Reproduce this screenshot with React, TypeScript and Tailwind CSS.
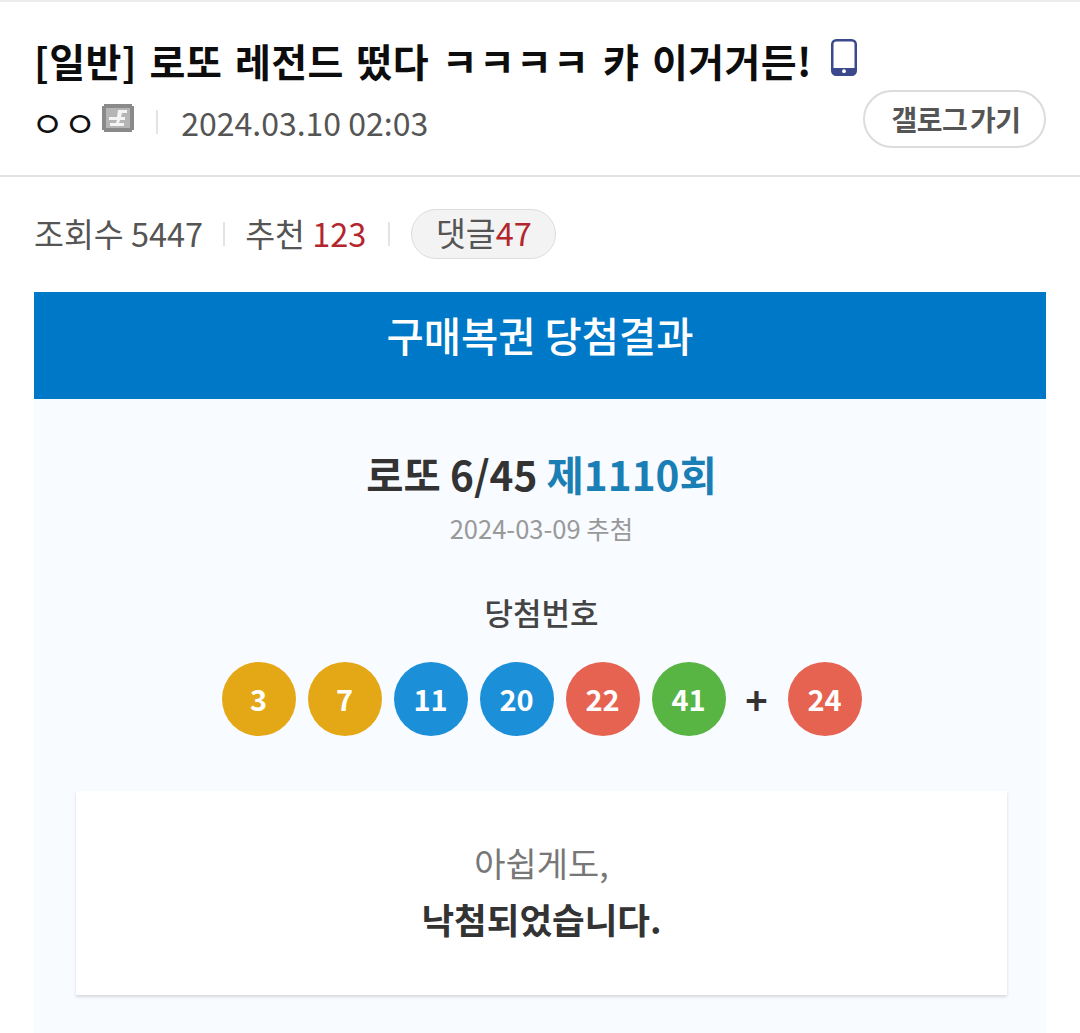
import React from 'react';

const FONT = '"Noto Sans CJK KR", "Noto Sans", sans-serif';

const BALLS = [
  { n: 3, color: 'bg-[#e4a816]' },
  { n: 7, color: 'bg-[#e4a816]' },
  { n: 11, color: 'bg-[#1b8fd8]' },
  { n: 20, color: 'bg-[#1b8fd8]' },
  { n: 22, color: 'bg-[#e66251]' },
  { n: 41, color: 'bg-[#58b443]' },
];

const Ball = ({ n, color }: { n: number; color: string }) => (
  <div className={`w-[74px] h-[74px] rounded-full flex items-center justify-center text-white text-[29px] font-bold ${color}`}>
    {n}
  </div>
);

const PhoneIcon = () => (
  <svg width="26" height="37" viewBox="0 0 26 37" className="block mb-[6px]">
    <rect x="1.25" y="1.25" width="23.5" height="34.5" rx="4" fill="#fff" stroke="#3b4a8c" strokeWidth="2.5" />
    <path d="M1.25 29h23.5v2.75a4 4 0 0 1-4 4h-15.5a4 4 0 0 1-4-4z" fill="#3b4a8c" />
    <circle cx="13" cy="32.2" r="1.9" fill="#fff" />
  </svg>
);

const GallogIcon = () => (
  <svg width="32" height="28" viewBox="0 0 32 28" className="block">
    <path d="M2 0h28v2h2v24h-2v2H2v-2H0V2h2z" fill="#8a8a8a" />
    <rect x="4" y="4" width="24" height="20" fill="#b5b5b5" />
    <path d="M7 13h8l1-7h9v3h-5l-1 4h4v3h-5l-1 3h5v3H8v-3h6l1-3H7z" fill="#f4f4f4" />
  </svg>
);

const Divider = () => <span className="block w-[2px] h-[24px] bg-[#e4e4e4]" />;

export default function App() {
  return (
    <div className="w-[1080px] h-[1033px] overflow-hidden bg-white" style={{ fontFamily: FONT }}>
      <div className="h-[2px] bg-[#ececec]" />

      <header className="h-[175px] px-[34px] pt-[32px] border-b-2 border-[#e2e2e2]">
        <div className="flex items-center gap-[19px] h-[52px]">
          <h1 className="text-[39px] leading-[52px] font-bold text-[#0d0d0d] tracking-[0.4px] [word-spacing:3.5px] whitespace-nowrap">
            [일반] 로또 레전드 떴다 <span className="tracking-[1.2px]">ㅋㅋㅋㅋ</span> 캬 이거거든!
          </h1>
          <PhoneIcon />
        </div>
        <div className="flex items-start justify-between">
          <div className="flex items-center h-[60px] mt-[6px]">
            <span className="-ml-[3px] text-[36px] leading-none text-[#111] tracking-[-0.5px]">ㅇㅇ</span>
            <span className="ml-[6px] mb-[8px]"><GallogIcon /></span>
            <span className="ml-[22px] mr-[23px]"><Divider /></span>
            <span className="text-[32px] leading-none text-[#555]">2024.03.10 02:03</span>
          </div>
          <button className="mt-[4px] w-[183px] h-[58px] pl-[3px] rounded-full border-2 border-[#dcdcdc] bg-white text-[28px] font-bold text-[#555] tracking-[-0.5px] [word-spacing:-3px]">
            갤로그 가기
          </button>
        </div>
      </header>

      <div className="flex items-center h-[115px] pb-[2px] px-[34px] text-[32.5px] text-[#555]">
        <span>조회수 5447</span>
        <span className="ml-[20px] mr-[20px]"><Divider /></span>
        <span>추천 <span className="text-[#b3262e]">123</span></span>
        <span className="ml-[22px] mr-[21px]"><Divider /></span>
        <span className="h-[50px] w-[145px] pb-[2px] rounded-full bg-[#f3f3f3] border border-[#dcdcdc] flex items-center justify-center">
          댓글<span className="text-[#b3262e]">47</span>
        </span>
      </div>

      <section className="mx-[34px]">
        <div className="h-[107px] pb-[20px] bg-[#0078c8] flex items-center justify-center text-white text-[40.5px] font-medium">
          구매복권 당첨결과
        </div>
        <div className="bg-[#f8fbff] h-[700px] pl-[42px] pr-[39px] pt-[49px] flex flex-col items-center">
          <div className="text-[40.5px] leading-[52px] font-bold text-[#333]">
            로또 6/45 <span className="text-[#1a7fb5]">제1110회</span>
          </div>
          <div className="mt-[10px] text-[25.5px] leading-[36px] text-[#999]">2024-03-09 추첨</div>
          <div className="mt-[44px] text-[31px] leading-[44px] font-medium text-[#444]">당첨번호</div>
          <div className="mt-[28px] flex items-center gap-[12px]">
            {BALLS.map(b => <Ball key={b.n} n={b.n} color={b.color} />)}
            <span className="w-[38px] text-center text-[38px] leading-none font-bold text-[#333]">+</span>
            <Ball n={24} color="bg-[#e66251]" />
          </div>
          <div className="mt-[55px] w-full h-[204px] pb-[5px] bg-white shadow-[0_2px_3px_rgba(0,0,0,0.14)] flex flex-col items-center justify-center">
            <div className="text-[34px] leading-[52px] text-[#777]">아쉽게도,</div>
            <div className="mt-[4px] text-[35.5px] leading-[52px] font-bold text-[#333]">낙첨되었습니다.</div>
          </div>
        </div>
      </section>
    </div>
  );
}
